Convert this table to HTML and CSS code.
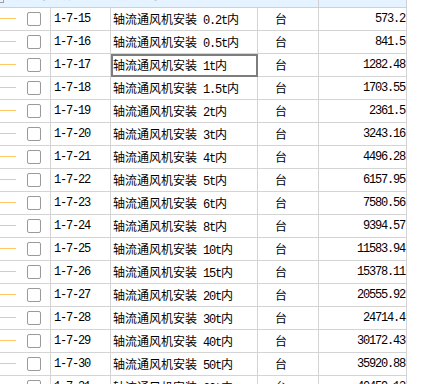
FILE: index.html
```html
<!DOCTYPE html>
<html lang="zh-CN">
<head>
<meta charset="utf-8">
<title>定额列表</title>
<link rel="stylesheet" href="styles.css">
</head>
<body>
<div class="grid">
  <div class="head">
    <div class="hcell hmain"><span class="hbox"></span><span class="htext">通风机安装 · 轴流通风机</span></div>
    <div class="hcell hlast"></div>
  </div>
  <div class="row"><div class="c tree"><i class="twig"></i><i class="chk"></i></div><div class="c code">1-7-15</div><div class="c name">轴流通风机安装<span class="m"> 0.2t</span>内</div><div class="c unit">台</div><div class="c num">573.2</div></div>
  <div class="row"><div class="c tree"><i class="twig"></i><i class="chk"></i></div><div class="c code">1-7-16</div><div class="c name">轴流通风机安装<span class="m"> 0.5t</span>内</div><div class="c unit">台</div><div class="c num">841.5</div></div>
  <div class="row"><div class="c tree"><i class="twig"></i><i class="chk"></i></div><div class="c code">1-7-17</div><div class="c name sel">轴流通风机安装<span class="m"> 1t</span>内</div><div class="c unit">台</div><div class="c num">1282.48</div></div>
  <div class="row"><div class="c tree"><i class="twig"></i><i class="chk"></i></div><div class="c code">1-7-18</div><div class="c name">轴流通风机安装<span class="m"> 1.5t</span>内</div><div class="c unit">台</div><div class="c num">1703.55</div></div>
  <div class="row"><div class="c tree"><i class="twig"></i><i class="chk"></i></div><div class="c code">1-7-19</div><div class="c name">轴流通风机安装<span class="m"> 2t</span>内</div><div class="c unit">台</div><div class="c num">2361.5</div></div>
  <div class="row"><div class="c tree"><i class="twig"></i><i class="chk"></i></div><div class="c code">1-7-20</div><div class="c name">轴流通风机安装<span class="m"> 3t</span>内</div><div class="c unit">台</div><div class="c num">3243.16</div></div>
  <div class="row"><div class="c tree"><i class="twig"></i><i class="chk"></i></div><div class="c code">1-7-21</div><div class="c name">轴流通风机安装<span class="m"> 4t</span>内</div><div class="c unit">台</div><div class="c num">4496.28</div></div>
  <div class="row"><div class="c tree"><i class="twig"></i><i class="chk"></i></div><div class="c code">1-7-22</div><div class="c name">轴流通风机安装<span class="m"> 5t</span>内</div><div class="c unit">台</div><div class="c num">6157.95</div></div>
  <div class="row"><div class="c tree"><i class="twig"></i><i class="chk"></i></div><div class="c code">1-7-23</div><div class="c name">轴流通风机安装<span class="m"> 6t</span>内</div><div class="c unit">台</div><div class="c num">7580.56</div></div>
  <div class="row"><div class="c tree"><i class="twig"></i><i class="chk"></i></div><div class="c code">1-7-24</div><div class="c name">轴流通风机安装<span class="m"> 8t</span>内</div><div class="c unit">台</div><div class="c num">9394.57</div></div>
  <div class="row"><div class="c tree"><i class="twig"></i><i class="chk"></i></div><div class="c code">1-7-25</div><div class="c name">轴流通风机安装<span class="m"> 10t</span>内</div><div class="c unit">台</div><div class="c num">11583.94</div></div>
  <div class="row"><div class="c tree"><i class="twig"></i><i class="chk"></i></div><div class="c code">1-7-26</div><div class="c name">轴流通风机安装<span class="m"> 15t</span>内</div><div class="c unit">台</div><div class="c num">15378.11</div></div>
  <div class="row"><div class="c tree"><i class="twig"></i><i class="chk"></i></div><div class="c code">1-7-27</div><div class="c name">轴流通风机安装<span class="m"> 20t</span>内</div><div class="c unit">台</div><div class="c num">20555.92</div></div>
  <div class="row"><div class="c tree"><i class="twig"></i><i class="chk"></i></div><div class="c code">1-7-28</div><div class="c name">轴流通风机安装<span class="m"> 30t</span>内</div><div class="c unit">台</div><div class="c num">24714.4</div></div>
  <div class="row"><div class="c tree"><i class="twig"></i><i class="chk"></i></div><div class="c code">1-7-29</div><div class="c name">轴流通风机安装<span class="m"> 40t</span>内</div><div class="c unit">台</div><div class="c num">30172.43</div></div>
  <div class="row"><div class="c tree"><i class="twig"></i><i class="chk"></i></div><div class="c code">1-7-30</div><div class="c name">轴流通风机安装<span class="m"> 50t</span>内</div><div class="c unit">台</div><div class="c num">35920.88</div></div>
  <div class="row"><div class="c tree"><i class="twig"></i><i class="chk"></i></div><div class="c code">1-7-31</div><div class="c name">轴流通风机安装<span class="m"> 60t</span>内</div><div class="c unit">台</div><div class="c num">40459.13</div></div>
</div>
</body>
</html>
```
FILE: styles.css
```css
html, body {
  margin: 0;
  padding: 0;
  background: #ffffff;
  overflow: hidden;
}
body {
  width: 424px;
  height: 384px;
  font-family: "Noto Sans CJK SC", "Liberation Sans", sans-serif;
  font-size: 12px;
  color: #000;
}
.grid {
  width: 407px;
}
.head {
  display: grid;
  grid-template-columns: 319px 88px;
  height: 8px;
  overflow: hidden;
  background: #e5f2ff;
}
.hcell {
  box-sizing: border-box;
  height: 8px;
  border-bottom: 1px solid #d0d0d0;
  border-right: 1px solid #d0d0d0;
  overflow: hidden;
  display: flex;
  align-items: flex-start;
}
.hbox {
  flex: none;
  width: 4px;
  height: 3px;
  border-right: 1px solid #a0a0a0;
  border-bottom: 1px solid #a0a0a0;
  box-sizing: border-box;
}
.htext {
  margin-left: 11px;
  margin-top: -12px;
  font-weight: bold;
  font-size: 12px;
  line-height: 12px;
  letter-spacing: 1px;
  color: #202020;
  white-space: nowrap;
}
.row {
  display: grid;
  grid-template-columns: 51px 60px 147px 61px 88px;
  height: 23px;
}
.c {
  box-sizing: border-box;
  height: 23px;
  line-height: 22px;
  border-bottom: 1px solid #d4d4d4;
  border-right: 1px solid #d4d4d4;
  white-space: nowrap;
  overflow: hidden;
}
.tree {
  display: flex;
  align-items: center;
  padding-bottom: 1px;
}
.twig {
  display: block;
  width: 16px;
  height: 1px;
  background: #ffc864;
  margin-top: -1px;
}
.chk {
  display: block;
  box-sizing: border-box;
  width: 14px;
  height: 14px;
  margin-left: 11px;
  border: 1px solid #9a9a9a;
  border-radius: 2px;
  background: #fff;
}
.code {
  padding-left: 3px;
  font-family: "Liberation Mono", "DejaVu Sans Mono", monospace;
  letter-spacing: -1.2px;
}
.name {
  padding-left: 2px;
}
.m {
  font-family: "Liberation Mono", "DejaVu Sans Mono", monospace;
  letter-spacing: -1.2px;
}
.sel {
  outline: 2px solid #7d7d7d;
  outline-offset: -2px;
}
.unit {
  padding-left: 17px;
}
.num {
  text-align: right;
  padding-right: 1px;
  font-family: "Liberation Mono", "DejaVu Sans Mono", monospace;
  letter-spacing: -1.2px;
}
```
